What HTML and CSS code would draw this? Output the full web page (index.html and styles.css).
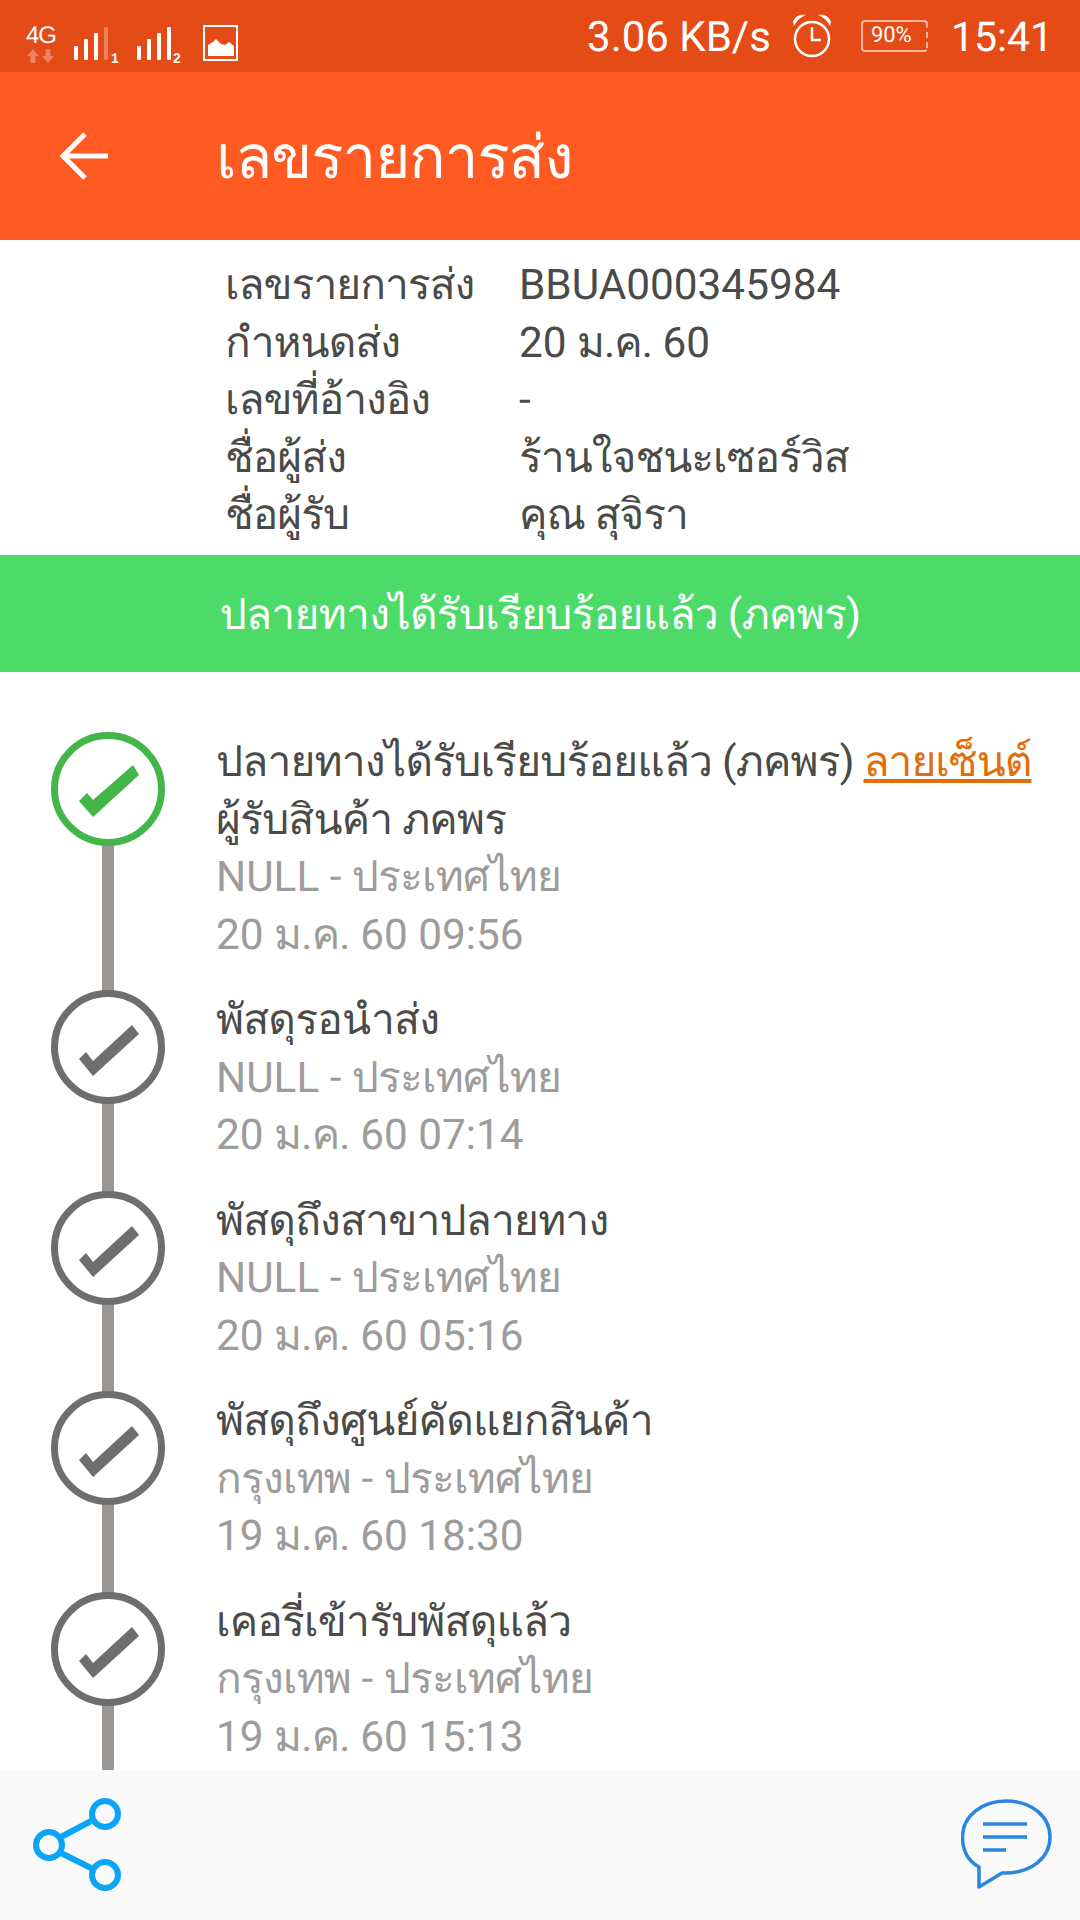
FILE: index.html
```html
<!DOCTYPE html>
<html lang="th">
<head>
<meta charset="utf-8">
<title>เลขรายการส่ง</title>
<link rel="stylesheet" href="styles.css">
</head>
<body>
<div class="screen">
  <div class="statusbar">
    <div class="status-left">
      <svg class="ic-4g" width="34" height="42" viewBox="0 0 34 42"><text x="0" y="21" class="t4g">4G</text><path d="M4.500 41V34H1L7 27 13 34H9.500V41ZM19.500 27V34H16L22 41 28 34H24.500V27Z" fill="#fff" opacity=".3"/></svg>
      <svg class="ic-sig" width="46" height="38" viewBox="0 0 46 38"><g fill="#fff"><rect x="1" y="19" width="4" height="14" rx="1"/><rect x="11" y="12" width="4" height="21" rx="1"/><rect x="21" y="6" width="4" height="27" rx="1"/><rect x="31" y="0" width="4" height="33" rx="1" opacity=".3"/></g><text x="38" y="36" class="tsub">1</text></svg>
      <svg class="ic-sig" width="48" height="38" viewBox="0 0 48 38"><g fill="#fff"><rect x="1" y="19" width="4" height="14" rx="1"/><rect x="11" y="12" width="4" height="21" rx="1"/><rect x="21" y="6" width="4" height="27" rx="1"/><rect x="31" y="0" width="4" height="33" rx="1"/></g><text x="37" y="36" class="tsub">2</text></svg>
      <svg class="ic-img" width="36" height="36" viewBox="0 0 36 36"><rect x="1" y="1" width="33" height="34" fill="none" stroke="#fff" stroke-width="2"/><path d="M5 31V20L10 17 13 14 18 19 22 20 26 17 31 21V31Z" fill="#fff"/></svg>
    </div>
    <div class="status-right">
      <span class="speed">3.06 KB/s</span>
      <svg class="ic-alarm" width="40" height="46" viewBox="0 0 40 46"><circle cx="20" cy="26" r="17" fill="none" stroke="#fff" stroke-width="2.500"/><path d="M20 14V27H29" fill="none" stroke="#fff" stroke-width="2.500"/><path d="M1 9C3 3 8 1 14 2 9 4 5 7 2 13ZM39 9C37 3 32 1 26 2 31 4 35 7 38 13Z" fill="#fff"/></svg>
      <span class="battery">90%</span>
      <span class="clock">15:41</span>
    </div>
  </div>

  <header class="appbar">
    <svg class="back" width="52" height="52" viewBox="0 0 52 52"><path d="M50 26H4M27 4 5 26 27 48" fill="none" stroke="#fff" stroke-width="5"/></svg>
    <h1 class="title">เลขรายการส่ง</h1>
  </header>

  <section class="info">
    <div>เลขรายการส่ง</div><div class="lat">BBUA000345984</div>
    <div>กำหนดส่ง</div><div><span class="lat">20 </span>ม.ค.<span class="lat"> 60</span></div>
    <div>เลขที่อ้างอิง</div><div class="lat">-</div>
    <div>ชื่อผู้ส่ง</div><div>ร้านใจชนะเซอร์วิส</div>
    <div>ชื่อผู้รับ</div><div>คุณ สุจิรา</div>
  </section>

  <div class="banner">ปลายทางได้รับเรียบร้อยแล้ว (ภคพร)</div>

  <main class="timeline">
    <article class="event event-done">
      <div class="marker">
        <svg class="tick" width="114" height="114" viewBox="0 0 114 114"><circle cx="57" cy="57" r="53.500" fill="#fff" stroke="currentColor" stroke-width="7"/><path d="M28 69 36 61 42 68 82 33 88 43 42 85Z" fill="currentColor"/></svg>
      </div>
      <div class="body">
        <p class="line">ปลายทางได้รับเรียบร้อยแล้ว (ภคพร) <a class="link" href="#">ลายเซ็นต์</a></p>
        <p class="line">ผู้รับสินค้า ภคพร</p>
        <p class="line muted"><span class="lat">NULL - </span>ประเทศไทย</p>
        <p class="line muted"><span class="lat">20 </span>ม.ค.<span class="lat"> 60 09:56</span></p>
      </div>
    </article>
    <article class="event">
      <div class="marker">
        <svg class="tick" width="114" height="114" viewBox="0 0 114 114"><circle cx="57" cy="57" r="53.500" fill="#fff" stroke="currentColor" stroke-width="7"/><path d="M28 69 35 62 42 71 81 35 88 44 42 86Z" fill="currentColor"/></svg>
      </div>
      <div class="body">
        <p class="line">พัสดุรอนำส่ง</p>
        <p class="line muted"><span class="lat">NULL - </span>ประเทศไทย</p>
        <p class="line muted"><span class="lat">20 </span>ม.ค.<span class="lat"> 60 07:14</span></p>
      </div>
    </article>
    <article class="event">
      <div class="marker">
        <svg class="tick" width="114" height="114" viewBox="0 0 114 114"><circle cx="57" cy="57" r="53.500" fill="#fff" stroke="currentColor" stroke-width="7"/><path d="M28 69 35 62 42 71 81 35 88 44 42 86Z" fill="currentColor"/></svg>
      </div>
      <div class="body">
        <p class="line">พัสดุถึงสาขาปลายทาง</p>
        <p class="line muted"><span class="lat">NULL - </span>ประเทศไทย</p>
        <p class="line muted"><span class="lat">20 </span>ม.ค.<span class="lat"> 60 05:16</span></p>
      </div>
    </article>
    <article class="event">
      <div class="marker">
        <svg class="tick" width="114" height="114" viewBox="0 0 114 114"><circle cx="57" cy="57" r="53.500" fill="#fff" stroke="currentColor" stroke-width="7"/><path d="M28 69 35 62 42 71 81 35 88 44 42 86Z" fill="currentColor"/></svg>
      </div>
      <div class="body">
        <p class="line">พัสดุถึงศูนย์คัดแยกสินค้า</p>
        <p class="line muted">กรุงเทพ<span class="lat"> - </span>ประเทศไทย</p>
        <p class="line muted"><span class="lat">19 </span>ม.ค.<span class="lat"> 60 18:30</span></p>
      </div>
    </article>
    <article class="event">
      <div class="marker">
        <svg class="tick" width="114" height="114" viewBox="0 0 114 114"><circle cx="57" cy="57" r="53.500" fill="#fff" stroke="currentColor" stroke-width="7"/><path d="M28 69 35 62 42 71 81 35 88 44 42 86Z" fill="currentColor"/></svg>
      </div>
      <div class="body">
        <p class="line">เคอรี่เข้ารับพัสดุแล้ว</p>
        <p class="line muted">กรุงเทพ<span class="lat"> - </span>ประเทศไทย</p>
        <p class="line muted"><span class="lat">19 </span>ม.ค.<span class="lat"> 60 15:13</span></p>
      </div>
    </article>
  </main>

  <footer class="bottombar">
    <svg width="94" height="98" viewBox="0 0 94 98"><g fill="none" stroke="#0AA5F5" stroke-width="6"><circle cx="16" cy="49" r="13"/><circle cx="72" cy="18" r="13"/><circle cx="72" cy="79" r="13"/><path d="M28 41 60 24M28 57 60 73"/></g></svg>
    <svg width="92" height="92" viewBox="0 0 92 92"><path d="M45 2C70 2 89 17 89 38S70 74 44 74H41L18 88V68C7 62 1.500 51 1.500 38 1.500 17 21 2 45 2Z" fill="none" stroke="#2A86E0" stroke-width="3.500" stroke-linejoin="round"/><path d="M22 25H66M22 38H66M22 51H45" fill="none" stroke="#2A86E0" stroke-width="3.500"/></svg>
  </footer>
</div>
</body>
</html>
```
FILE: styles.css
```css
* { box-sizing: border-box; }
html, body { margin: 0; padding: 0; }
body {
  width: 1080px;
  height: 1920px;
  overflow: hidden;
  background: #fff;
  font-family: Roboto, "Noto Sans", sans-serif;
  text-rendering: geometricPrecision;
}
.screen { display: flex; flex-direction: column; height: 1920px; }
.lat { font-size: 42.300px; letter-spacing: 0; }

.statusbar {
  height: 72px;
  flex: none;
  background: #E54B17;
  color: #fff;
  display: flex;
  align-items: center;
  justify-content: space-between;
  padding: 0 27px 0 26px;
}
.status-left { display: flex; align-items: flex-start; }
.ic-4g { margin-top: 15px; margin-right: 13px; }
.ic-sig { margin-top: 20px; margin-right: 17px; }
.ic-img { margin-top: 18px; margin-left: 2px; }
.t4g { font: 400 24px "Liberation Sans", sans-serif; fill: #fff; letter-spacing: -1px; }
.tsub { font: 700 14px "Liberation Sans", sans-serif; fill: #fff; }
.status-right { display: flex; align-items: center; }
.speed { font-size: 42px; line-height: 72px; margin-right: 21px; padding-top: 3px; }
.ic-alarm { margin-right: 29px; }
.battery {
  width: 67px;
  height: 32px;
  border: 2px solid rgba(255, 255, 255, .6);
  border-right-style: dashed;
  border-radius: 4px;
  font-size: 22px;
  line-height: 28px;
  padding-left: 8px;
  margin-right: 23px;
}
.clock { font-size: 41px; line-height: 72px; padding-top: 3px; }

.appbar {
  height: 168px;
  flex: none;
  background: #FF5A22;
  color: #fff;
  display: flex;
  align-items: center;
  padding-left: 58px;
}
.back { margin-right: 106px; }
.title { margin: 0; font-size: 60px; font-weight: 400; line-height: 1; padding-top: 4px; letter-spacing: -1px; }

.info {
  height: 315px;
  flex: none;
  display: grid;
  grid-template-columns: 294px 1fr;
  grid-auto-rows: 57.500px;
  padding: 17px 0 0 225px;
  font-size: 42.500px;
  letter-spacing: -1px;
  color: #4A4A48;
  align-items: center;
  line-height: 57.500px;
}

.banner {
  height: 117px;
  flex: none;
  background: #4CDB68;
  color: #fff;
  font-size: 42.500px;
  letter-spacing: -.7px;
  display: flex;
  align-items: center;
  justify-content: center;
}

.timeline { flex: 1; overflow: hidden; padding: 60px 0 0 51px; min-height: 0; }
.event { display: flex; padding-bottom: 26px; position: relative; }
.marker { width: 165px; flex: none; }
.event::before {
  content: "";
  position: absolute;
  left: 51px;
  width: 12px;
  top: 100px;
  bottom: -20px;
  background: #9A9694;
}
.tick { position: relative; display: block; color: #6D6E70; }
.event-done .tick { color: #43B649; }
.body { position: relative; padding-top: 2px; }
.line { margin: 0; font-size: 42.500px; letter-spacing: -.8px; line-height: 57.500px; color: #4A4A48; white-space: nowrap; }
.muted { color: #9E9C9A; }
.link { color: #E26E0B; letter-spacing: -1px; }

.bottombar {
  height: 150px;
  flex: none;
  position: relative;
  background: #FAFAFA;
  display: flex;
  align-items: center;
  justify-content: space-between;
  padding: 0 27px 0 33px;
}
```
